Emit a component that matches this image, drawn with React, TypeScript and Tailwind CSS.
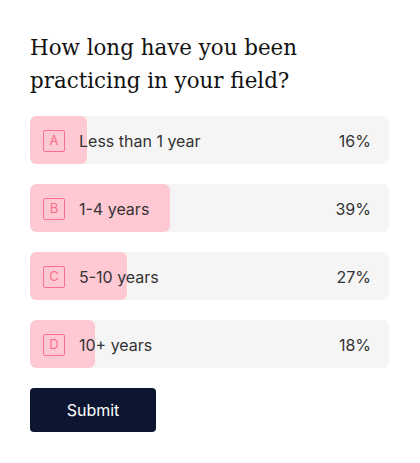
import React from 'react';

const options = [
  { key: 'A', label: 'Less than 1 year', pct: 16 },
  { key: 'B', label: '1-4 years', pct: 39 },
  { key: 'C', label: '5-10 years', pct: 27 },
  { key: 'D', label: '10+ years', pct: 18 },
];

export default function App() {
  return (
    <div className="w-[420px] h-[463px] bg-white px-[30px] pt-[31px] font-['Inter',sans-serif]">
      <h1 className="font-['DejaVu_Serif',serif] text-[21.4px] leading-[33px] text-[#111]">
        How long have you been practicing in your field?
      </h1>
      <div className="mt-[19px] flex flex-col gap-[20px] w-[359px]">
        {options.map((o) => (
          <div key={o.key} className="relative h-[48px] rounded-[6px] bg-[#f5f5f5] overflow-hidden">
            <div className="absolute inset-y-0 left-0 rounded-[6px] bg-[#ffc9d3]" style={{ width: `${o.pct}%` }} />
            <div className="relative h-full flex items-center pt-[2px] pl-[13px] pr-[18px]">
              <div className="w-[22px] h-[22px] border-[1.5px] border-[#f8708e] rounded-[2px] flex items-center justify-center text-[13px] text-[#f8708e]">
                {o.key}
              </div>
              <span className="ml-[14px] text-[16px] text-[#333]">{o.label}</span>
              <span className="ml-auto text-[16px] text-[#333]">{o.pct}%</span>
            </div>
          </div>
        ))}
      </div>
      <button className="mt-[20px] w-[126px] h-[44px] rounded-[4px] bg-[#0c1631] text-white text-[16px]">
        Submit
      </button>
    </div>
  );
}
